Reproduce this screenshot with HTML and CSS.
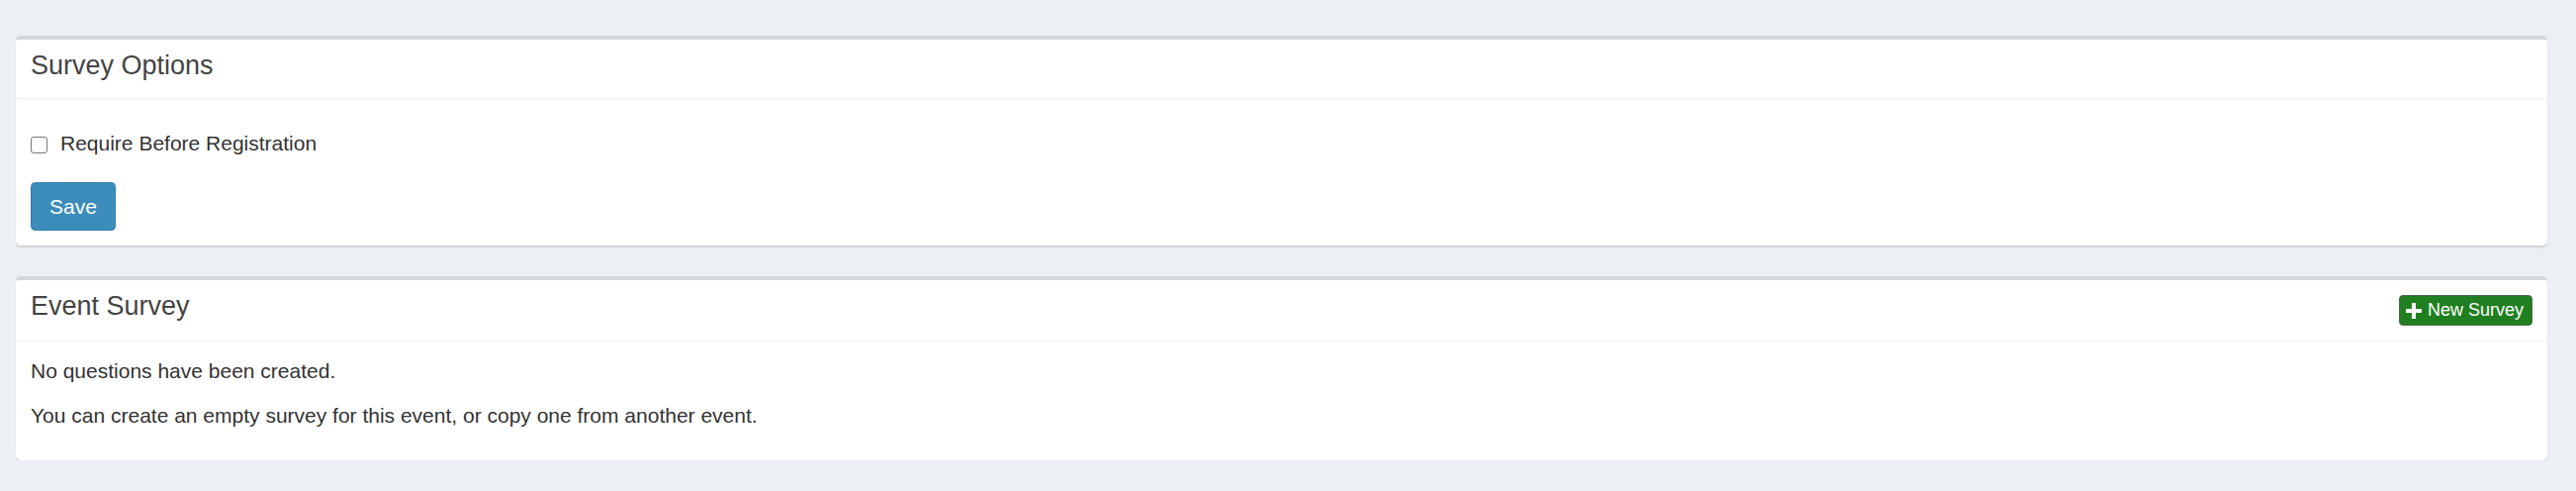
FILE: index.html
```html
<!DOCTYPE html>
<html lang="en">
<head>
<meta charset="utf-8">
<title>Survey</title>
<link rel="stylesheet" href="styles.css">
</head>
<body>
<div class="content">
  <section class="box">
    <div class="box-header">
      <h3 class="box-title">Survey Options</h3>
    </div>
    <div class="box-body">
      <label class="check-row">
        <input type="checkbox" class="check">
        <span>Require Before Registration</span>
      </label>
      <button class="btn btn-primary" type="button">Save</button>
    </div>
  </section>

  <section class="box">
    <div class="box-header">
      <h3 class="box-title">Event Survey</h3>
      <div class="box-tools">
        <button class="btn-xs btn-success" type="button">
          <svg class="plus" viewBox="0 0 16 16" width="16" height="16" aria-hidden="true"><path d="M6 0h4v6h6v4h-6v6h-4v-6h-6v-4h6z" fill="#fff"/></svg>
          <span>New Survey</span>
        </button>
      </div>
    </div>
    <div class="box-body">
      <p class="text">No questions have been created.</p>
      <p class="text">You can create an empty survey for this event, or copy one from another event.</p>
    </div>
  </section>
</div>
</body>
</html>
```

FILE: styles.css
```css
html, body {
  margin: 0;
  padding: 0;
}
body {
  background: #ecf0f5;
  font-family: "Liberation Sans", Arial, sans-serif;
  color: #333;
  font-size: 21px;
  line-height: 30px;
}
.content {
  padding: 36px 29px 0 16px;
  display: flex;
  flex-direction: column;
  gap: 31px;
}
.box {
  background: #fff;
  border-top: 4px solid #d2d6de;
  border-radius: 5px;
  box-shadow: 0 1.5px 1.5px rgba(0, 0, 0, 0.12);
}
.box-header {
  display: flex;
  justify-content: space-between;
  align-items: flex-start;
  padding: 13px 15px 0 15px;
  min-height: 60px;
  box-sizing: border-box;
  border-bottom: 1px solid #f4f4f4;
}
.box-title {
  margin: 0;
  font-size: 27px;
  font-weight: normal;
  line-height: 27px;
  color: #444;
}
.box-tools {
  padding-top: 2px;
  padding-bottom: 15px;
}
.box-body {
  padding: 15px;
}
.check-row {
  display: flex;
  align-items: center;
  height: 30px;
  margin-top: 15px;
  margin-bottom: 24px;
  gap: 13px;
  cursor: pointer;
}
.check {
  -webkit-appearance: none;
  appearance: none;
  width: 17px;
  height: 17px;
  margin: 0;
  border: 1.5px solid #767676;
  border-radius: 3px;
  background: #fff;
  box-sizing: border-box;
  position: relative;
  top: 1px;
}
.btn {
  display: block;
  height: 49px;
  padding: 0 18px;
  font-family: inherit;
  font-size: 21px;
  line-height: 47px;
  border-radius: 4.5px;
  cursor: pointer;
}
.btn-primary {
  background: #3c8dbc;
  border: 1px solid #367fa9;
  color: #fff;
}
.btn-xs {
  display: flex;
  align-items: center;
  gap: 6px;
  height: 31px;
  padding: 0 8px 0 6px;
  font-family: inherit;
  font-size: 18px;
  line-height: 29px;
  border-radius: 4px;
  cursor: pointer;
}
.btn-success {
  background: #207f20;
  border: 1px solid #4f6b4f;
  color: #fff;
}
.plus {
  display: block;
  flex: none;
  position: relative;
  top: 0.5px;
}
.text {
  margin: 0 0 15px;
}
.text:last-child {
  margin-bottom: 0;
}
.box-body .text:last-child {
  margin-bottom: 15px;
}
```
